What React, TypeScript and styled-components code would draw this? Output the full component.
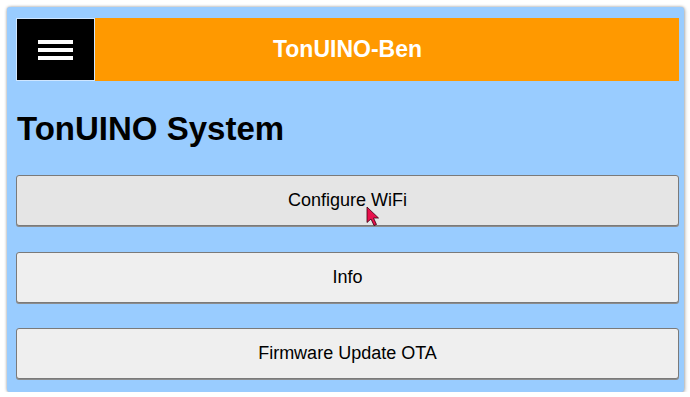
import styled, { createGlobalStyle } from 'styled-components';

const GlobalStyle = createGlobalStyle`
  html, body {
    margin: 0;
    padding: 0;
    background: #ffffff;
    font-family: "Liberation Sans", Arial, sans-serif;
  }
`;

const Frame = styled.div`
  box-sizing: border-box;
  width: 677px;
  height: 385px;
  margin: 7px 0 0 7px;
  padding: 11px 5px 0 9px;
  background: #99ccff;
  border-radius: 3px;
  box-shadow: 0 0 3px rgba(0, 0, 0, 0.35), 1px 1px 4px rgba(0, 0, 0, 0.2);
  overflow: hidden;
`;

const Header = styled.div`
  display: grid;
  grid-template-columns: 79px 1fr 79px;
  height: 63px;
  background: #ff9900;
`;

const MenuButton = styled.div`
  background: #000;
  display: flex;
  flex-direction: column;
  align-items: center;
  justify-content: center;
  gap: 4px;
  box-shadow: inset 0 0 0 1px #cfe6ff;
`;

const Bar = styled.span`
  display: block;
  width: 35px;
  height: 4px;
  background: #fff;
`;

const HeaderTitle = styled.div`
  color: #fff;
  font-weight: bold;
  font-size: 23px;
  display: flex;
  align-items: center;
  justify-content: center;
`;

const Title = styled.h1`
  margin: 29px 0 27px 1px;
  font-size: 33px;
  font-weight: bold;
  color: #000;
`;

const ButtonList = styled.div`
  display: flex;
  flex-direction: column;
  gap: 25.5px;
`;

const MenuItem = styled.div<{ $hover?: boolean }>`
  position: relative;
  box-sizing: border-box;
  height: 51px;
  display: flex;
  align-items: center;
  justify-content: center;
  background: ${(p) => (p.$hover ? '#e5e5e5' : '#efefef')};
  border: 1px solid #7a7a7a;
  border-radius: 3px;
  box-shadow: 0 1px 0 #8c8c8c;
  font-size: 18px;
  color: #000;
`;

const Cursor = styled.svg`
  position: absolute;
  left: 349px;
  top: 30px;
`;

export default function App() {
  return (
    <>
      <GlobalStyle />
      <Frame>
        <Header>
          <MenuButton>
            <Bar />
            <Bar />
            <Bar />
          </MenuButton>
          <HeaderTitle>TonUINO-Ben</HeaderTitle>
        </Header>
        <Title>TonUINO System</Title>
        <ButtonList>
          <MenuItem $hover>
            Configure WiFi
            <Cursor width="15" height="21" viewBox="0 0 15 21">
              <path
                d="M1 1 L1 16.5 L5 13 L8 19.5 L10.5 18.5 L7.5 12 L12.5 12 Z"
                fill="#e8104c"
                stroke="#3a0010"
                strokeWidth="0.8"
                strokeLinejoin="round"
              />
            </Cursor>
          </MenuItem>
          <MenuItem>Info</MenuItem>
          <MenuItem>Firmware Update OTA</MenuItem>
        </ButtonList>
      </Frame>
    </>
  );
}
